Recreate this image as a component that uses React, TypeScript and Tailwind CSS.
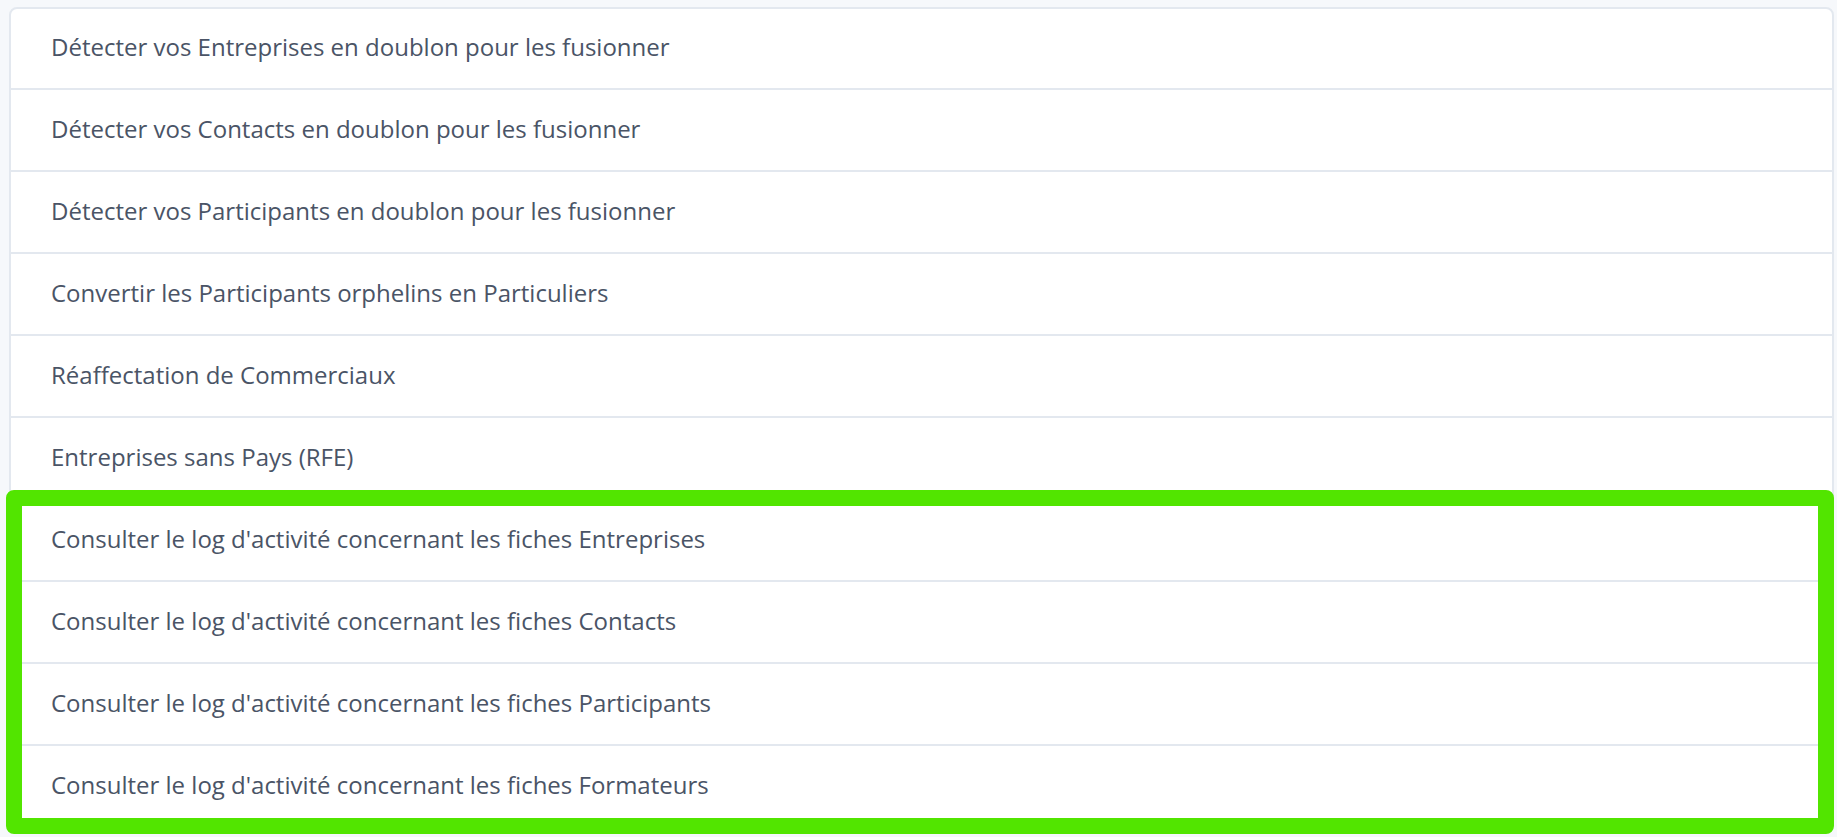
import React from "react";

const rows = [
  "Détecter vos Entreprises en doublon pour les fusionner",
  "Détecter vos Contacts en doublon pour les fusionner",
  "Détecter vos Participants en doublon pour les fusionner",
  "Convertir les Participants orphelins en Particuliers",
  "Réaffectation de Commerciaux",
  "Entreprises sans Pays (RFE)",
  "Consulter le log d'activité concernant les fiches Entreprises",
  "Consulter le log d'activité concernant les fiches Contacts",
  "Consulter le log d'activité concernant les fiches Participants",
  "Consulter le log d'activité concernant les fiches Formateurs",
];

export default function App() {
  return (
    <div className="w-[1837px] h-[837px] bg-[#f6f8fb] overflow-hidden" style={{ fontFamily: '"Open Sans", sans-serif' }}>
      <div className="relative pt-[7px] pl-[9px] pr-[3px]">
        <div className="bg-white border-2 border-[#e3e8ef] rounded-[8px] overflow-hidden">
          {rows.map((r, i) => (
            <div
              key={i}
              className={`flex items-center pl-[40px] pb-[3px] text-[24px] text-[#4a5466] ${i > 0 ? "border-t-2 border-[#e3e8ef] h-[82px]" : "h-[79px]"}`}
            >
              {r}
            </div>
          ))}
        </div>
        <div className="absolute left-[6px] top-[490px] w-[1828px] h-[344px] border-[16px] border-[#52e500] rounded-[8px]" />
      </div>
    </div>
  );
}
